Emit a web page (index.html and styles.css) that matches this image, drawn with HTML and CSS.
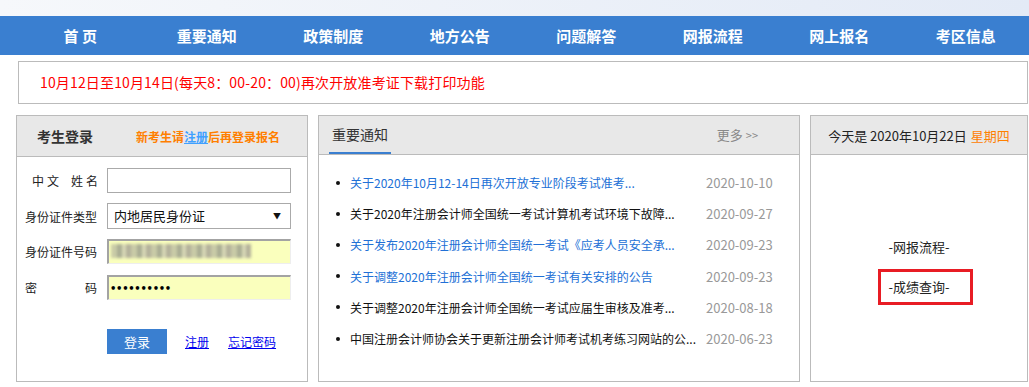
FILE: index.html
```
<!DOCTYPE html>
<html lang="zh-CN">
<head>
    <meta charset="UTF-8">
    <title>考生登录</title>
    <link rel="stylesheet" href="styles.css">
</head>
<body>
    <div class="topbar"></div>
    <div class="nav">
        <a href="#">首 页</a>
        <a href="#">重要通知</a>
        <a href="#">政策制度</a>
        <a href="#">地方公告</a>
        <a href="#">问题解答</a>
        <a href="#">网报流程</a>
        <a href="#">网上报名</a>
        <a href="#">考区信息</a>
    </div>

    <div class="notice">10月12日至10月14日(每天8：00-20：00)再次开放准考证下载打印功能</div>

    <div class="main">
        <!-- 考生登录 -->
        <div class="panel login">
            <div class="login-head">
                <span class="login-title">考生登录</span>
                <span class="reg-tip">新考生请<a href="#">注册</a>后再登录报名</span>
            </div>
            <div class="login-form">
                <div class="row">
                    <span class="lbl lbl-name">中文<i class="sp"></i>姓名</span>
                    <div class="field"></div>
                </div>
                <div class="row">
                    <span class="lbl">身份证件类型</span>
                    <div class="field select">内地居民身份证<span class="arrow">▼</span></div>
                </div>
                <div class="row">
                    <span class="lbl">身份证件号码</span>
                    <div class="field filled"><span class="mosaic"></span></div>
                </div>
                <div class="row">
                    <span class="lbl lbl-split"><span>密</span><span>码</span></span>
                    <div class="field filled"><span class="dots">••••••••••</span></div>
                </div>
                <div class="actions">
                    <button class="btn-login">登录</button>
                    <a href="#" class="link">注册</a>
                    <a href="#" class="link">忘记密码</a>
                </div>
            </div>
        </div>

        <!-- 重要通知 -->
        <div class="panel news">
            <div class="panel-head">
                <span class="tab">重要通知</span>
                <a href="#" class="more">更多 <small>&gt;&gt;</small></a>
            </div>
            <ul class="news-list">
                <li><a href="#" class="blue">关于2020年10月12-14日再次开放专业阶段考试准考...</a><span class="date">2020-10-10</span></li>
                <li><a href="#">关于2020年注册会计师全国统一考试计算机考试环境下故障...</a><span class="date">2020-09-27</span></li>
                <li><a href="#" class="blue">关于发布2020年注册会计师全国统一考试《应考人员安全承...</a><span class="date">2020-09-23</span></li>
                <li><a href="#" class="blue">关于调整2020年注册会计师全国统一考试有关安排的公告</a><span class="date">2020-09-23</span></li>
                <li><a href="#">关于调整2020年注册会计师全国统一考试应届生审核及准考...</a><span class="date">2020-08-18</span></li>
                <li><a href="#">中国注册会计师协会关于更新注册会计师考试机考练习网站的公...</a><span class="date">2020-06-23</span></li>
            </ul>
        </div>

        <!-- 日期 -->
        <div class="panel today">
            <div class="panel-head today-head">今天是 2020年10月22日 <span class="week">星期四</span></div>
            <div class="quick">
                <a href="#">-网报流程-</a>
                <a href="#" class="marked">-成绩查询-</a>
            </div>
        </div>
    </div>
</body>
</html>
```

FILE: styles.css
```
body {
    margin: 0;
    font-family: "Noto Sans CJK SC", "Microsoft YaHei", sans-serif;
    font-size: 13px;
    color: #222;
    background: #fff;
    width: 1029px;
    overflow: hidden;
}
a {
    color: inherit;
    text-decoration: none;
}
.topbar {
    height: 16px;
    background: linear-gradient(to right, #f6f8fb, #e3eaf6);
}
.nav {
    height: 39px;
    background-color: #3a7fd0;
    display: grid;
    grid-template-columns: repeat(8, 126.5px);
    padding-left: 17px;
}
.nav a {
    color: #fff;
    font-size: 15px;
    font-weight: bold;
    line-height: 39px;
    text-align: center;
}
.notice {
    margin: 6px 0 0 18px;
    width: 1010px;
    height: 43px;
    box-sizing: border-box;
    border: 1px solid #bbb;
    padding-left: 21px;
    line-height: 41px;
    font-size: 14px;
    letter-spacing: 0.15px;
    color: #f00;
}
.main {
    display: flex;
    gap: 10px;
    margin: 11px 0 0 16px;
}
.panel {
    border: 1px solid #bbb;
    height: 267px;
    box-sizing: border-box;
}
.login { width: 292px; }
.news { width: 482px; }
.today { width: 218px; }

/* login */
.login-head {
    height: 40px;
    background: #e8e8e8;
    border-bottom: 1px solid #bbb;
    display: flex;
    align-items: center;
    padding-left: 20px;
}
.login-title {
    font-size: 14px;
    font-weight: bold;
    color: #333;
    width: 99px;
}
.reg-tip {
    font-size: 12px;
    font-weight: bold;
    color: #ff7f00;
}
.reg-tip a {
    color: #3fa0ff;
    text-decoration: underline;
}
.login-form {
    padding: 11px 0 0 7px;
}
.row {
    display: flex;
    align-items: center;
    height: 25px;
    margin-bottom: 10.6px;
}
.lbl {
    width: 73px;
    margin-right: 10px;
    text-align: right;
    font-size: 12px;
    color: #222;
    white-space: nowrap;
}
.lbl-name {
    text-align: left;
    box-sizing: border-box;
    padding-left: 8px;
    letter-spacing: 3px;
}
.sp {
    display: inline-block;
    width: 9px;
}
.lbl-split {
    display: flex;
    justify-content: space-between;
    padding-left: 1px;
    box-sizing: border-box;
}
.field {
    width: 184px;
    height: 25px;
    box-sizing: border-box;
    border: 1px solid #aaa;
    background: #fff;
    position: relative;
}
.select {
    height: 26px;
    padding-left: 6px;
    font-size: 13px;
    line-height: 24px;
    color: #111;
}
.arrow {
    position: absolute;
    right: 9px;
    top: 0;
    font-size: 8px;
}
.filled {
    background: #faffbd;
    border-top: 2px solid #a3a3a3;
    border-left: 2px solid #a3a3a3;
    border-right: 1px solid #eee;
    border-bottom: 1px solid #eee;
}
.mosaic {
    position: absolute;
    left: 2px;
    top: 3px;
    width: 140px;
    height: 14px;
    background: repeating-linear-gradient(to right, #c9cba7 0 6px, #a9ad93 6px 11px, #d8d9b6 11px 15px, #b3b19a 15px 20px);
    filter: blur(1.5px);
}
.dots {
    font-family: "DejaVu Sans", sans-serif;
    font-size: 10px;
    font-weight: bold;
    line-height: 20px;
    padding-left: 1px;
    letter-spacing: -0.3px;
    color: #000;
}
.actions {
    display: flex;
    align-items: center;
    margin: 29px 0 0 83px;
}
.btn-login {
    width: 60px;
    height: 25px;
    border: none;
    background: #3a7fd0;
    color: #fff;
    font-family: inherit;
    font-size: 13px;
    padding: 0;
    margin-right: 18px;
}
.link {
    font-size: 12px;
    color: #0000ee;
    text-decoration: underline;
    margin-right: 19px;
}

/* news */
.panel-head {
    height: 38px;
    background: #e8e8e8;
    border-bottom: 1px solid #bbb;
    display: flex;
    justify-content: space-between;
    align-items: flex-end;
    padding: 0 41px 0 10px;
}
.tab {
    font-size: 14px;
    color: #333;
    line-height: 36px;
    padding: 0 3px;
    border-bottom: 2px solid #3a7fd0;
}
.more {
    color: #888;
    font-size: 13px;
    line-height: 38px;
}
.more small {
    font-size: 11px;
}
.news-list {
    list-style: none;
    margin: 0;
    padding: 12px 0 0 17px;
}
.news-list li {
    display: flex;
    height: 31.2px;
    align-items: center;
}
.news-list li::before {
    content: "";
    width: 4px;
    height: 4px;
    border-radius: 50%;
    background: #111;
    margin-right: 10px;
}
.news-list li a {
    width: 356px;
    font-size: 12px;
    color: #111;
    white-space: nowrap;
}
.news-list li a.blue {
    color: #2170d6;
}
.date {
    color: #999;
    font-size: 13px;
}

/* today */
.today-head {
    justify-content: center;
    align-items: center;
    padding: 0;
    font-size: 13px;
    color: #222;
}
.week {
    color: #ff8000;
    margin-left: 4px;
}
.quick {
    height: 224px;
    display: flex;
    flex-direction: column;
    justify-content: center;
    align-items: center;
}
.quick a {
    height: 40px;
    line-height: 40px;
    font-size: 13px;
    color: #222;
}
.marked {
    position: relative;
}
.marked::after {
    content: "";
    position: absolute;
    left: -10px;
    right: -23px;
    top: 2px;
    bottom: 2px;
    border: 3px solid #e81c24;
}
```
